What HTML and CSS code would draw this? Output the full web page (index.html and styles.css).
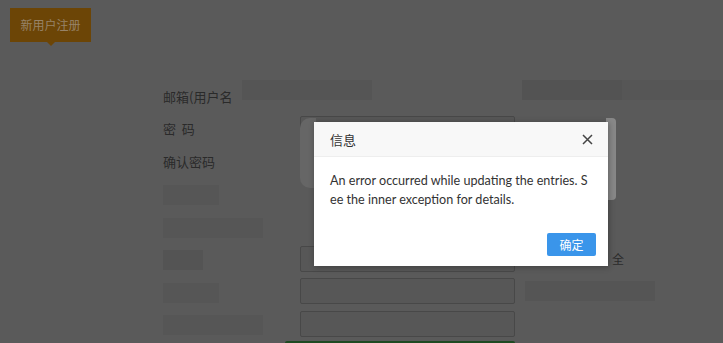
FILE: index.html
```html
<!DOCTYPE html>
<html>
<head>
<meta charset="utf-8">
<link rel="stylesheet" href="styles.css">
</head>
<body>
<div class="page">
  <div class="tabs">
    <div class="tab">新用户注册</div>
  </div>
  <div class="mosaic-band">
    <span class="m m1"></span><span class="m m2"></span><span class="m m3"></span><span class="m m4"></span>
  </div>
  <div class="form">
    <div class="row"><div class="label">邮箱(用户名</div><div class="field"></div></div>
    <div class="row"><div class="label">密&nbsp;&nbsp;码</div><div class="field"><div class="input"></div></div></div>
    <div class="row"><div class="label">确认密码</div><div class="field"><div class="input"></div></div></div>
    <div class="row"><div class="label"><span class="blk b1"></span></div><div class="field"></div></div>
    <div class="row"><div class="label"><span class="blk b2"></span></div><div class="field"></div></div>
    <div class="row"><div class="label"><span class="blk b3"></span></div><div class="field"><div class="input"></div></div><span class="hint">全</span></div>
    <div class="row"><div class="label"><span class="blk b1"></span></div><div class="field"><div class="input"></div></div><span class="blk b4"></span></div>
    <div class="row"><div class="label"><span class="blk b2"></span></div><div class="field"><div class="input"></div></div></div>
    <div class="submit-row"><div class="submit"></div></div>
  </div>

  <div class="ghost-left"></div>
  <div class="ghost-right"></div>
  <div class="dialog">
    <div class="dlg-head">
      <span class="dlg-title">信息</span>
      <svg class="dlg-close" width="11" height="11" viewBox="0 0 11 11"><path d="M1 1 L10 10 M10 1 L1 10" stroke="#444" stroke-width="1.5" fill="none"/></svg>
    </div>
    <div class="dlg-body">An error occurred while updating the entries. See the inner exception for details.</div>
    <div class="dlg-foot"><span class="btn">确定</span></div>
  </div>
</div>
</body>
</html>
```
FILE: styles.css
```css
html, body {
  margin: 0;
  padding: 0;
}
body {
  background: #5a5a5a;
  width: 723px;
  height: 343px;
  overflow: hidden;
  font-family: "Microsoft YaHei", "Noto Sans CJK SC", "Noto Sans", sans-serif;
}
.page {
  position: relative;
  width: 723px;
  height: 343px;
  overflow: hidden;
}
.tabs {
  height: 42px;
  padding: 8px 0 0 10px;
  box-sizing: border-box;
}
.tab {
  position: relative;
  width: 81px;
  height: 34px;
  background: #6c4506;
  color: #978368;
  font-size: 12px;
  line-height: 34px;
  text-align: center;
}
.tab::after {
  content: "";
  position: absolute;
  left: 37px;
  bottom: -4px;
  border-left: 4px solid transparent;
  border-right: 4px solid transparent;
  border-top: 4px solid #6c4506;
}
.mosaic-band {
  position: absolute;
  left: 242px;
  top: 80px;
  width: 481px;
  height: 20px;
  display: flex;
}
.m { height: 20px; background: #555; }
.m1 { width: 130px; }
.m2 { width: 150px; background: #5a5a5a; }
.m3 { width: 100px; background: #535353; }
.m4 { width: 101px; background: #565656; }
.form {
  display: flex;
  flex-direction: column;
  margin-top: 38.8px;
}
.row {
  display: flex;
  height: 32.4px;
  align-items: center;
}
.label {
  width: 137px;
  margin-left: 163px;
  font-size: 13px;
  color: #2a2a2a;
  height: 32.4px;
  line-height: 32.4px;
}
.field {
  width: 215px;
  height: 32.4px;
  display: flex;
  align-items: center;
}
.input {
  width: 213px;
  height: 24px;
  border: 1px solid #484848;
  border-radius: 2px;
  background: #575757;
}
.hint {
  margin-left: 97px;
  font-size: 12px;
  color: #2a2a2a;
}
.submit-row {
  padding: 1px 0 0 285px;
}
.submit {
  width: 230px;
  height: 8px;
  background: #1f4a22;
  border-radius: 2px 2px 0 0;
}
.blk {
  display: inline-block;
  vertical-align: middle;
  height: 20px;
  background: #565656;
}
.b1 { width: 56px; }
.b2 { width: 100px; }
.b3 { width: 40px; background: #545454; }
.b4 { width: 130px; margin-left: 10px; background: #555; }
.ghost-left {
  position: absolute;
  left: 300px;
  top: 118px;
  width: 16px;
  height: 70px;
  background: #666;
  border-radius: 10px 0 0 10px;
}
.ghost-right {
  position: absolute;
  left: 606px;
  top: 118px;
  width: 10px;
  height: 82px;
  background: #888;
  border-radius: 0 4px 4px 0;
}
.dialog {
  position: absolute;
  left: 314px;
  top: 122px;
  width: 294px;
  height: 144px;
  background: #fff;
  box-shadow: 1px 1px 6px rgba(0,0,0,0.3);
  display: flex;
  flex-direction: column;
}
.dlg-head {
  height: 34px;
  background: #f8f8f8;
  border-bottom: 1px solid #eee;
  display: flex;
  align-items: center;
  justify-content: space-between;
  padding: 0 15px 0 16px;
}
.dlg-title {
  font-size: 13px;
  color: #333;
}
.dlg-close { display: block; }
.dlg-body {
  padding: 14px 0 0 16px;
  width: 259px;
  font-family: Lato, "Noto Sans", sans-serif;
  font-size: 12.6px;
  line-height: 19px;
  color: #333;
  word-break: break-all;
  flex: 1;
}
.dlg-foot {
  display: flex;
  justify-content: flex-end;
  padding: 0 12px 10px 0;
}
.btn {
  width: 49px;
  height: 23px;
  line-height: 23px;
  text-align: center;
  background: #3a95ea;
  color: #fff;
  font-size: 12px;
  border-radius: 2px;
}
```
